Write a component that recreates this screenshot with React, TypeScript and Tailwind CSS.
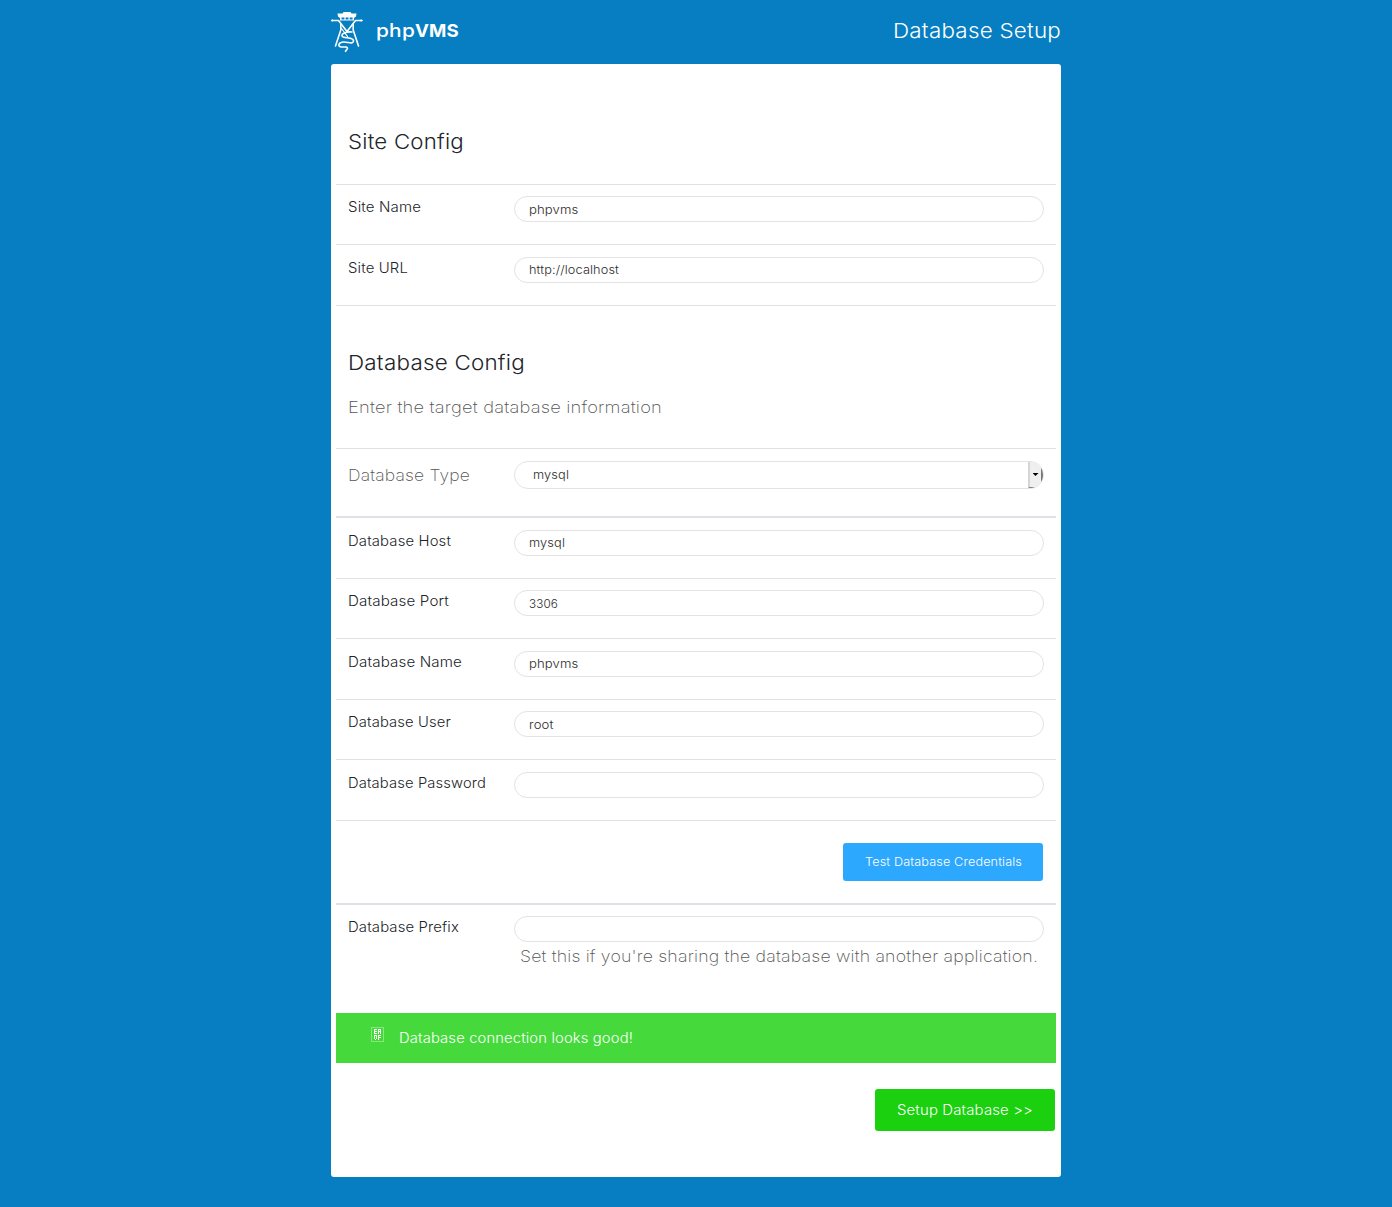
import { useLayoutEffect, useRef } from "react";

type FitProps = { w: number; className?: string; children: string };

/* Single line of text widened so that it spans the given width. */
function Fit({ w, className = "", children }: FitProps) {
  const ref = useRef<HTMLSpanElement>(null);
  useLayoutEffect(() => {
    const el = ref.current;
    if (!el) return;
    el.style.transform = "none";
    const natural = el.getBoundingClientRect().width;
    el.style.transform = `scaleX(${w / natural})`;
  }, [w, children]);
  return (
    <span className={`block whitespace-nowrap ${className}`} style={{ width: w }}>
      <span ref={ref} className="inline-block origin-left tracking-[0.01em]">
        {children}
      </span>
    </span>
  );
}

function Logo() {
  return (
    <svg className="h-[42px] w-[32px]" viewBox="0 0 32 42" fill="none" stroke="#fff" strokeWidth="1.6" strokeLinecap="round" strokeLinejoin="round">
      <path d="M12.500 1 H19.500 L20.500 2.500 H25.500 L25 5.500 L23 7 V9.500 H9 V7 L7 5.500 L6.500 2.500 H11.500 Z" fill="#fff" stroke="none" />
      <path d="M10.500 6.500 h2.900 v2 h-2.900z M14.600 6.500 h2.900 v2 h-2.900z M18.700 6.500 h2.900 v2 h-2.900z" fill="#067ec1" stroke="none" />
      <path d="M1 9.500 H7.500 L16 20.500 L24.500 9.500 H31" />
      <path d="M9.800 13 V19 L4.500 35 M22.200 13 V19 L27.500 35" />
      <path d="M21 21 C16 20.500 10.500 22 11 24.800 C11.500 28 23 25.500 22.500 30 C22 34 16.500 30.500 12 31 C7 31.700 6.500 35.500 10.500 36 C14 36 16.500 35.500 16.500 37.500 L14.500 40.300" />
      <path d="M10.500 17.500 L16.500 25.500" strokeWidth="1.200" />
      <circle cx="1.300" cy="9.500" r="1.100" fill="#fff" stroke="none" />
      <circle cx="30.200" cy="9.500" r="1.100" fill="#fff" stroke="none" />
    </svg>
  );
}

type RowProps = { label: string; w: number; value?: string; vw?: number; tight?: boolean; className: string };

function Row({ label, w, value, vw = 0, tight = false, className }: RowProps) {
  return (
    <div className={`flex border-t border-[#dee2e6] px-3 ${tight ? "pt-[11px]" : "pt-3"} ${className}`}>
      <div className="w-[166px] pt-px text-[14px] leading-5 text-[#212529]">
        <Fit w={w}>{label}</Fit>
      </div>
      <div className={`flex h-[26px] w-[530px] items-center rounded-full border border-[#e3e3e3] pl-3.5 text-[12px] text-[#2c2c2c] ${tight ? "pt-0.5" : ""}`}>
        {value && <Fit w={vw}>{value}</Fit>}
      </div>
    </div>
  );
}

export default function App() {
  return (
    <div className="h-[1207px] bg-[#067ec1] font-['Inter',sans-serif] font-light">
      <div className="mx-auto w-[730px]">
        <header className="flex h-16 items-start justify-between text-white">
          <div className="flex pt-[11px]">
            <Logo />
            <div className="ml-[13px] mt-2 flex text-[18px] leading-6">
              <Fit w={39} className="font-medium">php</Fit>
              <Fit w={44} className="font-bold">VMS</Fit>
            </div>
          </div>
          <h1 className="pt-4 text-[20.500px] leading-[30px]"><Fit w={168}>Database Setup</Fit></h1>
        </header>
        <main className="h-[1113px] rounded-[3px] bg-white px-[5px] pt-[60px]">
          <h2 className="h-[60px] pl-3 pt-[3px] text-[20.500px] leading-[30px] text-[#212529]"><Fit w={116}>Site Config</Fit></h2>
          <Row label="Site Name" w={73} value="phpvms" vw={49.5} tight className="h-[60px]" />
          <Row label="Site URL" w={60} value="http://localhost" vw={90} className="h-[61px]" />
          <div className="h-[143px] border-t border-[#dee2e6] pl-3 pt-[42px]">
            <h2 className="text-[20.500px] leading-[30px] text-[#212529]"><Fit w={177}>Database Config</Fit></h2>
            <p className="mt-4 text-[16.500px] font-extralight leading-[26px] text-[#555]"><Fit w={314}>Enter the target database information</Fit></p>
          </div>
          <div className="flex h-[68px] border-t border-[#dee2e6] px-3 pt-3">
            <div className="w-[166px] pt-px text-[16.500px] font-extralight leading-[26px] text-[#555]"><Fit w={122}>Database Type</Fit></div>
            <div className="flex h-7 w-[530px] items-center overflow-hidden rounded-full border border-[#e3e3e3] pl-[18px] text-[12px] text-[#2c2c2c]">
              <Fit w={36}>mysql</Fit>
              <div className="ml-auto flex h-[26px] w-[15px] items-center justify-center border-b border-l-2 border-r-2 border-b-[#777] border-l-[#d5d5d5] border-r-[#777] bg-[#efefef]">
                <div className="h-[3px] w-1.5 bg-black [clip-path:polygon(0_0,100%_0,50%_100%)]" />
              </div>
            </div>
          </div>
          <Row label="Database Host" w={103} value="mysql" vw={36} className="h-[62px] border-t-2" />
          <Row label="Database Port" w={101} value="3306" vw={29} tight className="h-[60px]" />
          <Row label="Database Name" w={114} value="phpvms" vw={49.5} className="h-[61px]" />
          <Row label="Database User" w={103} value="root" vw={24.5} tight className="h-[60px]" />
          <Row label="Database Password" w={138} className="h-[61px]" />
          <div className="flex h-[83px] justify-end border-t border-[#dee2e6] pr-[13px] pt-[22px]">
            <button className="flex h-[38px] w-[200px] items-center justify-center rounded-[3px] bg-[#2ca8ff] text-[12px] text-white"><Fit w={157} className="text-left">Test Database Credentials</Fit></button>
          </div>
          <Row label="Database Prefix" w={111} tight className="h-[40px] border-t-2" />
          <p className="h-[70px] pl-[184px] text-[16.500px] font-extralight leading-[26px] text-[#555]"><Fit w={518}>Set this if you're sharing the database with another application.</Fit></p>
          <div className="flex h-[50px] items-center bg-[#46d93c] text-white">
            <svg className="mb-2 ml-[35px] h-[15px] w-[13px]" viewBox="0 0 13 15" shapeRendering="crispEdges" fill="none">
              <path d="M.5 .5h12v14h-12z" stroke="#86e680" />
              <path d="M3.500 2v5M3 2.500h3M3 4.500h3M3 6.500h3M7.500 2v5M9.500 2v5M7 2.500h3M7 4.500h3M3.500 8v4M5.500 8v4M4 12.500h1M4 8.500h1M7.500 8v5M7 8.500h3M7 10.500h3" stroke="#fff" />
            </svg>
            <div className="ml-[15px] text-[14px] leading-5"><Fit w={234}>Database connection looks good!</Fit></div>
          </div>
          <div className="flex justify-end pr-px pt-[26px]">
            <button className="flex h-[42px] w-[180px] items-center justify-center rounded-[3px] bg-[#1bd00f] pb-0.5 text-[14px] text-white"><Fit w={136} className="text-left">Setup Database &gt;&gt;</Fit></button>
          </div>
        </main>
      </div>
    </div>
  );
}
